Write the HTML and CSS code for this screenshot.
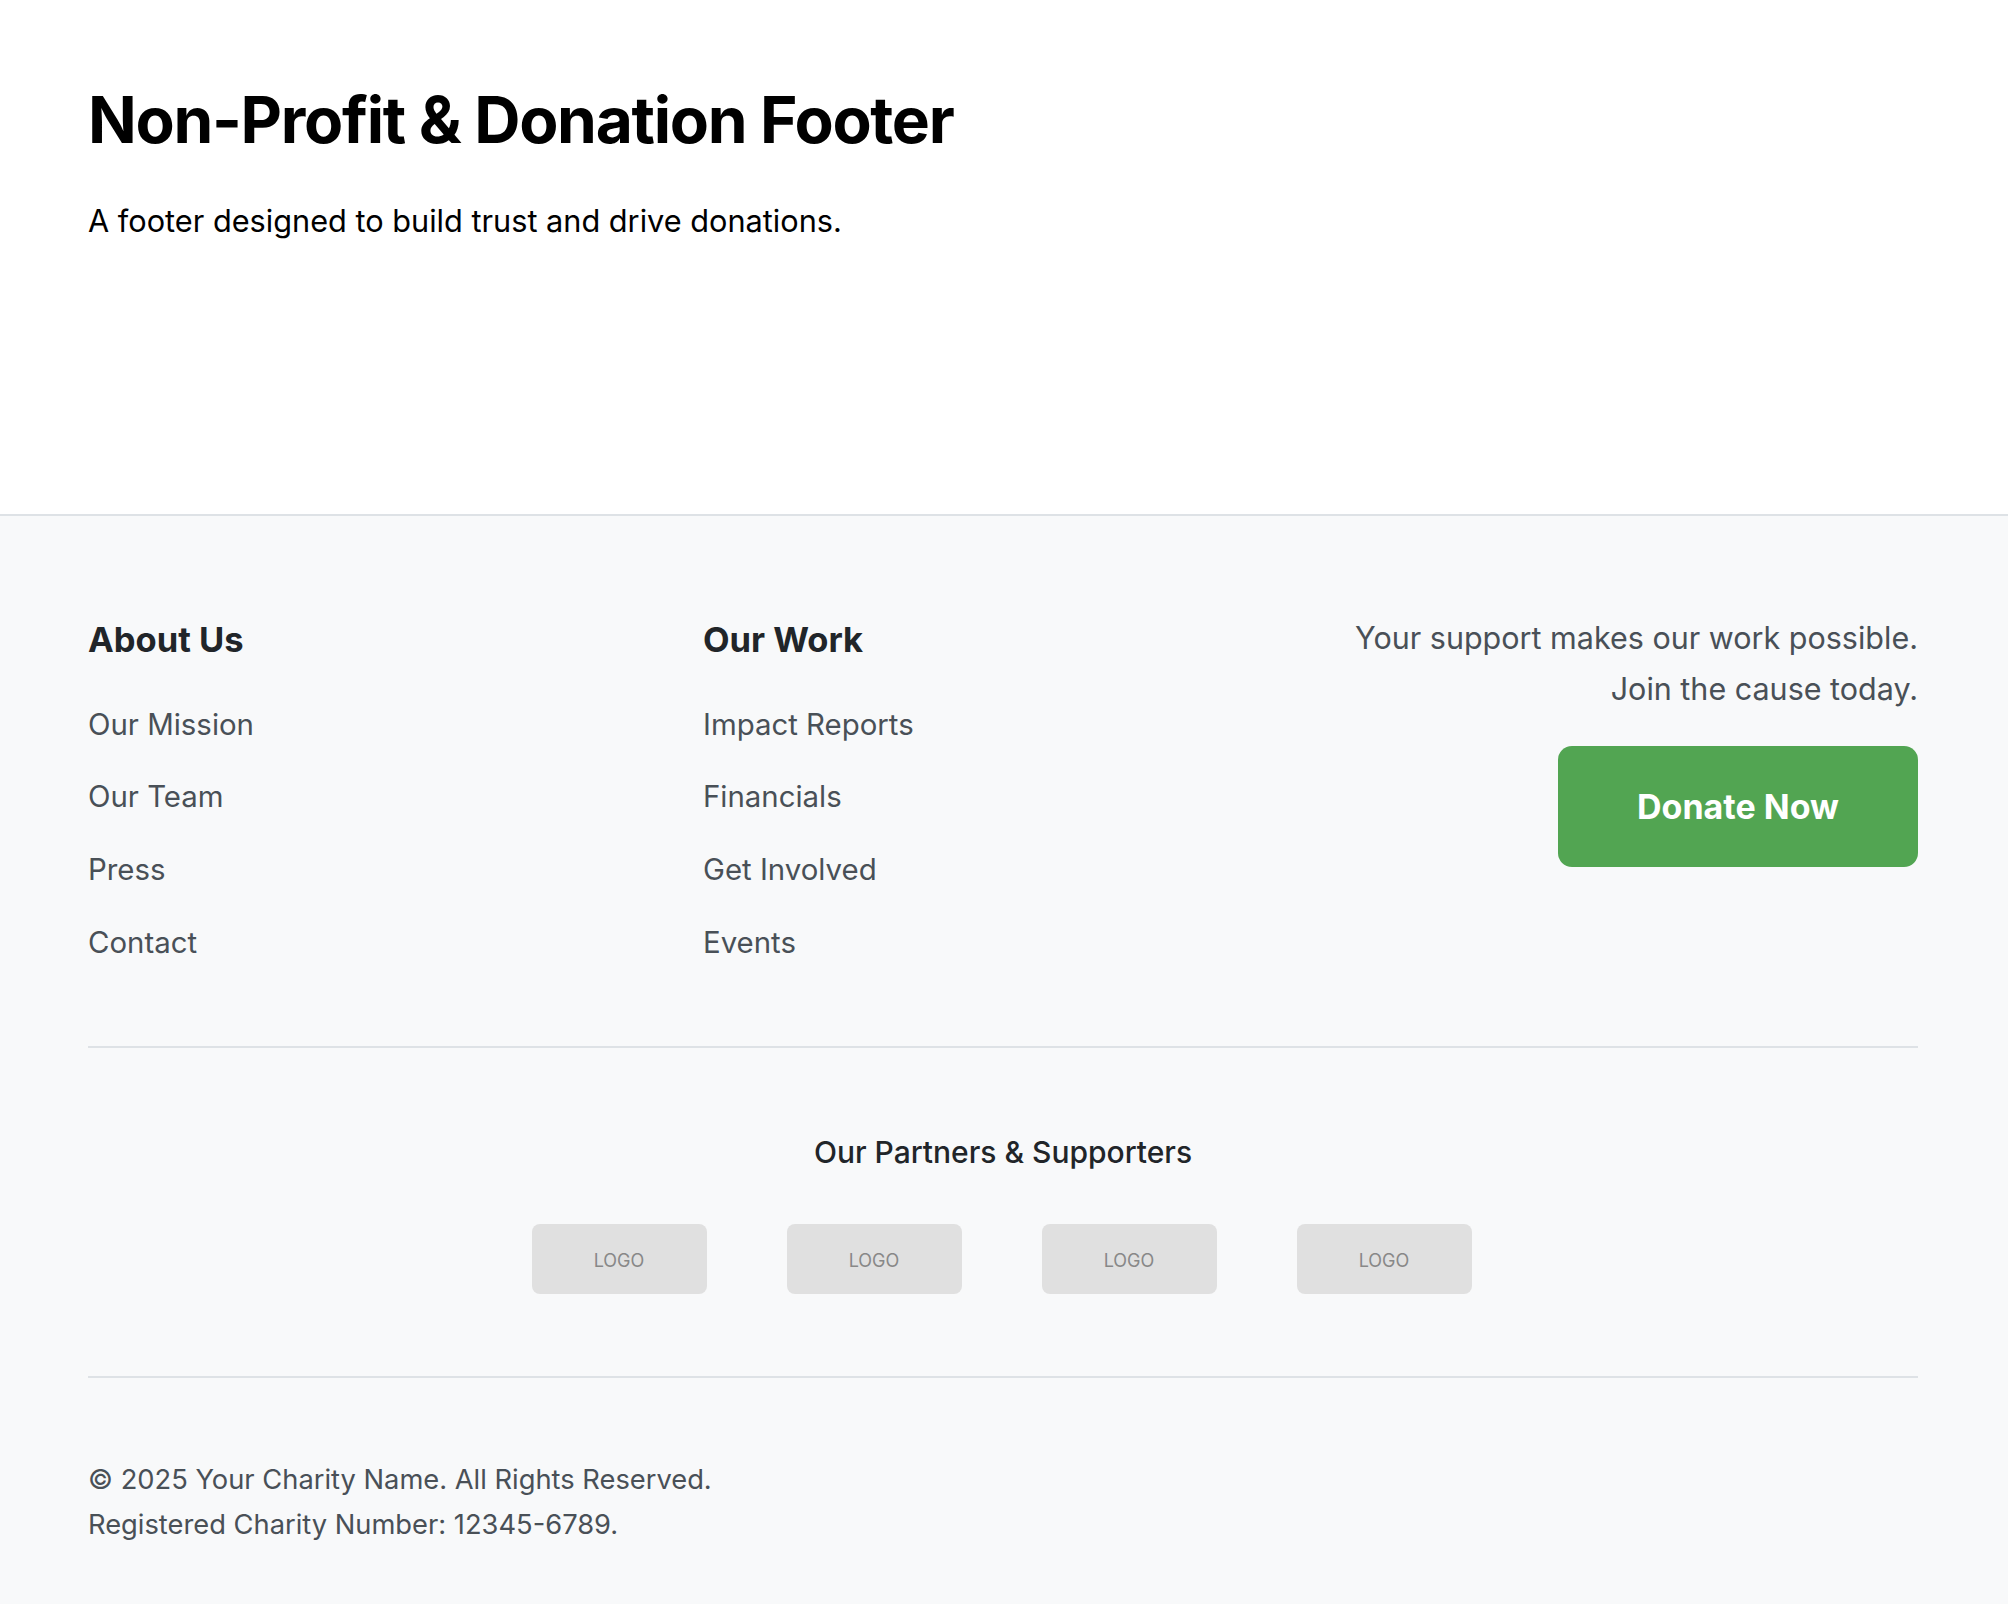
FILE: index.html
```html
<!DOCTYPE html>
<html lang="en">
<head>
<meta charset="utf-8">
<title>Non-Profit &amp; Donation Footer</title>
<link rel="stylesheet" href="styles.css">
</head>
<body>
<header class="intro">
  <h1 class="intro-title">Non-Profit &amp; Donation Footer</h1>
  <p class="intro-text">A footer designed to build trust and drive donations.</p>
</header>
<footer class="site-footer">
  <div class="footer-main">
    <div class="footer-col">
      <h3 class="footer-heading">About Us</h3>
      <ul class="footer-links">
        <li><a href="#">Our Mission</a></li>
        <li><a href="#">Our Team</a></li>
        <li><a href="#">Press</a></li>
        <li><a href="#">Contact</a></li>
      </ul>
    </div>
    <div class="footer-col">
      <h3 class="footer-heading">Our Work</h3>
      <ul class="footer-links">
        <li><a href="#">Impact Reports</a></li>
        <li><a href="#">Financials</a></li>
        <li><a href="#">Get Involved</a></li>
        <li><a href="#">Events</a></li>
      </ul>
    </div>
    <div class="footer-col footer-cta">
      <p class="cta-text">Your support makes our work possible.<br>Join the cause today.</p>
      <a href="#" class="donate-btn">Donate Now</a>
    </div>
  </div>
  <div class="partners">
    <h4 class="partners-title">Our Partners &amp; Supporters</h4>
    <div class="partner-logos">
      <div class="logo-box">LOGO</div>
      <div class="logo-box">LOGO</div>
      <div class="logo-box">LOGO</div>
      <div class="logo-box">LOGO</div>
    </div>
  </div>
  <div class="footer-bottom">
    <p class="legal">© 2025 Your Charity Name. All Rights Reserved.<br>Registered Charity Number: 12345-6789.</p>
  </div>
</footer>
</body>
</html>
```

FILE: styles.css
```css
* { box-sizing: border-box; }

html, body {
  margin: 0;
  padding: 0;
}

body {
  font-family: Inter, "Noto Sans", "Liberation Sans", sans-serif;
  background: #ffffff;
  color: #000000;
  line-height: 1.6;
}

.intro {
  padding: 82px 88px 268.5px;
}

.intro-title {
  margin: 0;
  font-size: 64px;
  line-height: 1.2;
  font-weight: 700;
  letter-spacing: -1.3px;
}

.intro-text {
  margin: 37.5px 0 0;
  font-size: 30.7px;
  line-height: 1.6;
}

.site-footer {
  background: #f8f9fa;
  border-top: 2px solid #dee2e6;
  padding: 96px 90px 64px 88px;
  color: #495057;
}

.footer-main {
  display: grid;
  grid-template-columns: repeat(3, 1fr);
  column-gap: 15px;
  padding-bottom: 57px;
  border-bottom: 2px solid #dee2e6;
}

.footer-heading {
  margin: 0 0 31.7px;
  font-size: 34.5px;
  line-height: 1.6;
  font-weight: 700;
  color: #212529;
}

.footer-links {
  list-style: none;
  margin: 0;
  padding: 0;
}

.footer-links li {
  margin-bottom: 21.4px;
  font-size: 29.4px;
  line-height: 51.2px;
}

.footer-links a {
  color: #495057;
  text-decoration: none;
}

.footer-cta {
  display: flex;
  flex-direction: column;
  align-items: flex-end;
  text-align: right;
}

.cta-text {
  margin: 0 0 32px;
  font-size: 30.5px;
  line-height: 51.2px;
  color: #495057;
}

.donate-btn {
  display: inline-block;
  width: 360px;
  height: 121px;
  line-height: 121px;
  text-align: center;
  background: #52a552;
  color: #ffffff;
  border-radius: 14px;
  font-size: 34px;
  font-weight: 700;
  text-decoration: none;
}

.partners {
  padding: 80px 0 82px;
  border-bottom: 2px solid #dee2e6;
  text-align: center;
}

.partners-title {
  margin: 0 0 48px;
  font-size: 30px;
  line-height: 48px;
  font-weight: 500;
  color: #212529;
}

.partner-logos {
  display: flex;
  justify-content: center;
  gap: 80px;
  margin-right: 3px;
}

.logo-box {
  width: 175px;
  height: 70px;
  padding-top: 4px;
  background: #e0e0e0;
  border-radius: 8px;
  display: flex;
  align-items: center;
  justify-content: center;
  font-size: 18px;
  color: #888888;
}

.footer-bottom {
  padding-top: 80px;
}

.legal {
  margin: 0;
  font-size: 27.3px;
  line-height: 44.8px;
  color: #495057;
}
```
